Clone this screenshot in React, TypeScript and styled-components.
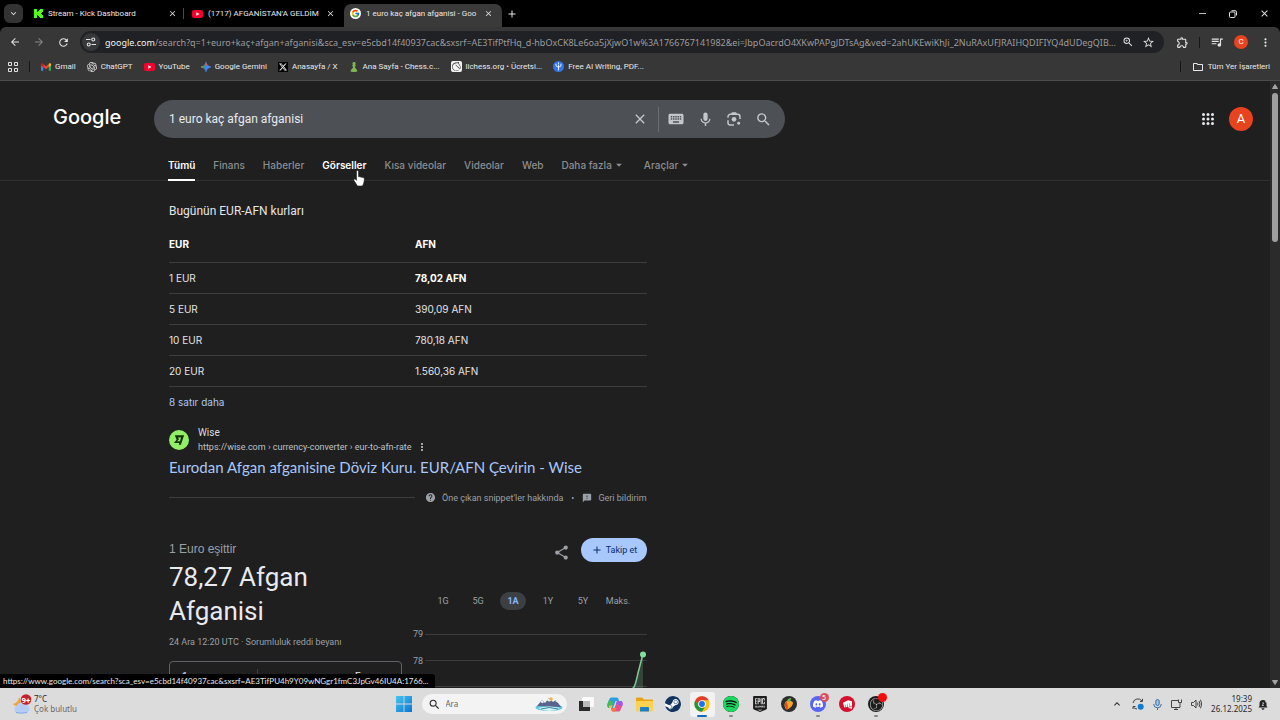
import React from "react";
import styled, { createGlobalStyle, css } from "styled-components";
import {
  MdArrowBack, MdArrowDropDown, MdArrowForward, MdClose, MdFeedback, MdHelp,
  MdKeyboard, MdMic, MdMoreVert, MdOutlineExtension, MdQueueMusic, MdRefresh, MdSearch, MdShare,
  MdStarBorder, MdZoomIn, MdAdd, MdExpandMore, MdExpandLess, MdOutlineFolder,
} from "react-icons/md";
import { FcGoogle } from "react-icons/fc";
import {
  SiChessdotcom, SiDiscord, SiEpicgames, SiLichess, SiObsstudio, SiOpenai, SiRiotgames, SiSpotify, SiSteam, SiX,
} from "react-icons/si";

const ui = `"Noto Sans", "Open Sans", sans-serif`;
const compact = `Roboto, "Noto Sans", sans-serif`;
const narrow = `Lato, Roboto, sans-serif`;
const product = `Inter, Roboto, sans-serif`;
const plain = `"Liberation Sans", Arial, sans-serif`;

const GlobalStyle = createGlobalStyle`
  * { box-sizing: border-box; }
  body { margin: 0; background: #1f1f1f; overflow: hidden; }
  button, input, select { font: inherit; color: inherit; background: none; border: 0; padding: 0; margin: 0; }
  a { color: inherit; text-decoration: none; }
  svg { display: block; flex: none; }
`;

/* ---------- browser frame ---------- */

const Window = styled.div`
  display: flex;
  flex-direction: column;
  height: 100vh;
  background: #000;
  color: #e8e8e8;
  font-family: ${ui};
`;

const IconButton = styled.button<{ $size?: number; $bg?: string; $color?: string; $radius?: number }>`
  display: flex;
  align-items: center;
  justify-content: center;
  flex: none;
  width: ${(p) => p.$size ?? 20}px;
  height: ${(p) => p.$size ?? 20}px;
  color: ${(p) => p.$color ?? "#e3e3e3"};
  background: ${(p) => p.$bg ?? "none"};
  border-radius: ${(p) => p.$radius ?? 10}px;
`;

const TabStrip = styled.div`
  display: flex;
  align-items: flex-end;
  height: 27px;
  padding-left: 4px;
  flex: none;
`;

const StripSlot = styled.div<{ $gap?: number }>`
  display: flex;
  align-items: center;
  height: 27px;
  gap: ${(p) => p.$gap ?? 0}px;
`;

const Tabs = styled.div`
  display: flex;
  margin-left: 5px;
`;

const TabItem = styled.div<{ $active?: boolean; $divider?: boolean }>`
  display: flex;
  align-items: center;
  position: relative;
  width: 158px;
  height: 23px;
  padding: 0 6px 4px 6px;
  font-family: ${compact};
  font-size: 8px;
  border-radius: 7px 7px 0 0;
  background: ${(p) => (p.$active ? "#3a3a3a" : "transparent")};
  ${(p) => p.$divider && css`
    &::after { content: ""; position: absolute; right: 2px; top: 4px; width: 1px; height: 11px; background: #4a4a4a; }
  `}
`;

const TabTitle = styled.span`
  flex: 1;
  min-width: 0;
  margin-left: 5px;
  overflow: hidden;
  white-space: nowrap;
`;

const WindowControls = styled(StripSlot)`
  margin-left: auto;
  padding-right: 6px;
`;

const Toolbar = styled.div`
  flex: none;
  background: #373737;
  border-radius: 6px 6px 0 0;
  border-bottom: 1px solid #4c4c4c;
`;

const AddressRow = styled.div`
  display: flex;
  align-items: center;
  height: 30px;
  padding: 0 5px;
`;

const NavButtons = styled.div`
  display: flex;
  gap: 4px;
  margin-right: 7px;
`;

const Omnibox = styled.div`
  display: flex;
  align-items: center;
  flex: 1;
  min-width: 0;
  height: 22px;
  padding: 0 6px 0 2px;
  border-radius: 11px;
  background: #202124;
`;

const Url = styled.div`
  flex: 1;
  min-width: 0;
  margin-left: 5px;
  overflow: hidden;
  white-space: nowrap;
  font-size: 9px;
  color: #9c9c9c;
  b { font-weight: 400; color: #f1f1f1; }
`;

const ToolbarActions = styled.div`
  display: flex;
  align-items: center;
  gap: 7px;
  margin-left: 8px;
`;

const Divider = styled.span<{ $color?: string; $height?: number; $left?: number }>`
  flex: none;
  width: 1px;
  height: ${(p) => p.$height ?? 11}px;
  margin-left: ${(p) => p.$left ?? 0}px;
  background: ${(p) => p.$color ?? "#161616"};
`;

const Avatar = styled.button<{ $size: number }>`
  flex: none;
  width: ${(p) => p.$size}px;
  height: ${(p) => p.$size}px;
  border-radius: 50%;
  background: #e8431f;
  color: #fff;
  font-family: ${compact};
  font-size: ${(p) => (p.$size > 20 ? 13 : 8)}px;
  line-height: ${(p) => p.$size}px;
  text-align: center;
`;

const Bookmarks = styled.nav`
  display: flex;
  align-items: center;
  height: 23px;
  padding: 0 10px 4px 8px;
  gap: 11px;
  font-family: ${compact};
  font-size: 8px;
`;

const Bookmark = styled.a`
  display: flex;
  align-items: center;
  gap: 4px;
  white-space: nowrap;
`;

const Spacer = styled.span`
  flex: 1;
`;

/* ---------- page ---------- */

const Viewport = styled.div`
  display: flex;
  flex: 1;
  min-height: 0;
  position: relative;
  background: #1f1f1f;
`;

const Page = styled.main`
  flex: 1;
  min-width: 0;
  overflow: hidden;
  font-family: ${product};
`;

const Scrollbar = styled.div`
  display: flex;
  flex-direction: column;
  align-items: center;
  width: 10px;
  background: #2b2b2b;
`;

const Thumb = styled.div`
  width: 6px;
  height: 149px;
  border-radius: 3px;
  background: #9f9f9f;
`;

const SearchHeader = styled.header`
  display: flex;
  align-items: center;
  padding: 19px 17px 0 0;
`;

const Logo = styled.a`
  align-self: flex-start;
  width: 154px;
  padding-left: 53px;
  font-size: 20px;
  line-height: 35px;
  font-weight: 500;
  color: #fff;
`;

const SearchBox = styled.form`
  display: flex;
  align-items: center;
  flex: 0 1 631px;
  height: 38px;
  padding: 0 12px 0 15px;
  border-radius: 19px;
  background: #4d5156;
  input { flex: 1; min-width: 0; font-family: ${compact}; font-size: 12px; color: #e8eaed; outline: 0; }
`;

const SearchTools = styled.div`
  display: flex;
  gap: 9px;
  margin-left: 7px;
`;

const HeaderActions = styled.div`
  display: flex;
  align-items: center;
  gap: 10px;
  margin-left: auto;
`;

const FilterBar = styled.nav`
  display: flex;
  gap: 18px;
  height: 43px;
  padding: 13px 0 0 168px;
  border-bottom: 1px solid #2f3031;
  font-size: 10px;
`;

const Filter = styled.a<{ $on?: boolean; $current?: boolean }>`
  position: relative;
  display: flex;
  align-items: center;
  height: 30px;
  white-space: nowrap;
  font-weight: ${(p) => (p.$on ? 600 : 500)};
  color: ${(p) => (p.$on ? "#fff" : "#8b8d90")};
  border-bottom: 2px solid ${(p) => (p.$current ? "#fff" : "transparent")};
`;

const Pointer = styled.svg`
  position: absolute;
  right: 1px;
  top: 19px;
`;

const Results = styled.div`
  width: 478px;
  margin-left: 169px;
`;

const SnippetTitle = styled.h2`
  margin: 0;
  padding-top: 21px;
  font-family: ${compact};
  font-size: 12px;
  line-height: 18px;
  font-weight: 400;
  color: #e4e5e7;
`;

const RateTable = styled.table`
  width: 100%;
  margin-top: 7px;
  border-collapse: collapse;
  table-layout: fixed;
  font-size: 10px;
  line-height: 14px;
  color: #e4e5e7;
  th, td { height: 31px; padding: 0; text-align: left; border-bottom: 1px solid #3c3e40; }
  th { height: 35px; padding-bottom: 1px; font-weight: 700; color: #fff; }
  th:first-child { width: 246px; }
  tbody tr:first-child td:last-child { font-weight: 700; color: #fff; }
`;

const MoreRows = styled.button`
  display: block;
  margin-top: 8px;
  font-size: 10px;
  line-height: 14px;
  color: #a8c7fa;
`;

const Source = styled.div`
  display: flex;
  align-items: center;
  gap: 9px;
  margin-top: 17px;
  font-family: ${compact};
`;

const SourceText = styled.div`
  font-size: 10px;
  line-height: 14px;
  color: #dadce0;
`;

const SourceUrl = styled.div`
  display: flex;
  align-items: center;
  gap: 4px;
  font-size: 9px;
  color: #bdc1c6;
`;

const ResultLink = styled.a`
  display: block;
  margin-top: 3px;
  font-family: ${narrow};
  font-size: 15px;
  line-height: 21px;
  white-space: nowrap;
  color: #a8c7fa;
`;

const SnippetFooter = styled.div`
  display: flex;
  align-items: center;
  margin-top: 12px;
  height: 16px;
  font-family: ${compact};
  font-size: 9px;
  color: #9aa0a6;
  white-space: nowrap;
`;

const Rule = styled.span`
  flex: none;
  width: 246px;
  height: 1px;
  background: #3c3e40;
`;

const FooterLink = styled.a<{ $left: number }>`
  display: flex;
  align-items: center;
  gap: 6px;
  margin-left: ${(p) => p.$left}px;
`;

const CurrencyCard = styled.section`
  display: flex;
  justify-content: space-between;
  margin-top: 32px;
`;

const Converter = styled.div`
  width: 233px;
  font-family: ${compact};
`;

const AmountLabel = styled.div`
  font-family: ${plain};
  font-size: 12px;
  line-height: 22px;
  color: #9aa0a6;
`;

const Amount = styled.div`
  width: 200px;
  font-size: 26px;
  line-height: 34px;
  color: #e8eaed;
`;

const RateTime = styled.div`
  margin-top: 8px;
  font-size: 9px;
  line-height: 12px;
  color: #9aa0a6;
`;

const ConvertRow = styled.div`
  display: flex;
  align-items: center;
  height: 32px;
  margin-top: 13px;
  padding: 0 12px;
  border: 1px solid #5f6368;
  border-radius: 4px;
  font-size: 10px;
  input { width: 75px; }
  select { flex: 1; padding-left: 97px; appearance: none; }
`;

const ChartPanel = styled.div`
  width: 234px;
  font-family: ${compact};
  font-size: 9px;
  color: #9aa0a6;
`;

const CurrencyActions = styled.div`
  display: flex;
  align-items: flex-start;
  justify-content: flex-end;
  gap: 5px;
`;

const Follow = styled.button`
  display: flex;
  align-items: center;
  justify-content: center;
  gap: 3px;
  width: 66px;
  height: 24px;
  border-radius: 12px;
  background: #a8c7fa;
  color: #062e6f;
`;

const Ranges = styled.div`
  display: flex;
  gap: 9px;
  margin-top: 24px;
  padding-left: 17px;
`;

const Range = styled.button<{ $on?: boolean }>`
  width: 26px;
  height: 18px;
  border-radius: 9px;
  white-space: nowrap;
  font-weight: ${(p) => (p.$on ? 700 : 400)};
  color: ${(p) => (p.$on ? "#8ab4f8" : "inherit")};
  background: ${(p) => (p.$on ? "#3c4043" : "none")};
`;

const StatusBubble = styled.div`
  position: absolute;
  left: 0;
  bottom: 0;
  height: 14px;
  padding: 0 7px 0 3px;
  border-radius: 0 3px 0 0;
  background: #000;
  color: #e8e8e8;
  font-family: ${narrow};
  font-size: 8px;
  line-height: 14px;
  white-space: nowrap;
`;

/* ---------- taskbar ---------- */

const Taskbar = styled.footer`
  display: grid;
  grid-template-columns: 1fr auto 1fr;
  align-items: center;
  flex: none;
  height: 32px;
  padding: 0 12px;
  background: #dcdcdc;
  color: #2a2a2a;
  font-size: 8px;
  line-height: 10px;
`;

const Weather = styled.button`
  display: flex;
  align-items: center;
  gap: 2px;
  width: max-content;
  text-align: left;
  span { display: block; color: #6a6a6a; }
`;

const Apps = styled.div`
  display: flex;
  align-items: center;
  gap: 4px;
`;

const TaskSearch = styled.label`
  display: flex;
  align-items: center;
  gap: 5px;
  width: 145px;
  height: 20px;
  margin: 0 3px 0 1px;
  padding: 0 4px 0 6px;
  border-radius: 10px;
  background: #f3f3f3;
  input { flex: 1; min-width: 0; outline: 0; }
  input::placeholder { color: #666; opacity: 1; }
`;

const AppButton = styled.button<{ $active?: boolean; $running?: boolean }>`
  position: relative;
  display: flex;
  align-items: center;
  justify-content: center;
  width: 25px;
  height: 25px;
  border-radius: 3px;
  background: ${(p) => (p.$active ? "#f2f2f2" : "none")};
  ${(p) => (p.$active || p.$running) && css`
    &::after {
      content: "";
      position: absolute;
      bottom: 0;
      width: ${p.$active ? 10 : 4}px;
      height: 2px;
      border-radius: 1px;
      background: ${p.$active ? "#0f6cbd" : "#888"};
    }
  `}
`;

const Disc = styled.span<{ $bg: string; $color?: string; $radius?: number; $size?: number }>`
  display: flex;
  align-items: center;
  justify-content: center;
  flex: none;
  width: ${(p) => p.$size ?? 16}px;
  height: ${(p) => p.$size ?? 16}px;
  border-radius: ${(p) => p.$radius ?? 8}px;
  background: ${(p) => p.$bg};
  color: ${(p) => p.$color ?? "#fff"};
`;

const Badge = styled.span<{ $bg: string }>`
  position: absolute;
  top: 1px;
  right: 2px;
  width: 9px;
  height: 9px;
  border-radius: 50%;
  background: ${(p) => p.$bg};
  color: #fff;
  font-size: 7px;
  line-height: 9px;
  text-align: center;
`;

const Tray = styled.div<{ $gap: number }>`
  display: flex;
  align-items: center;
  justify-content: flex-end;
  gap: ${(p) => p.$gap}px;
`;

const Clock = styled.time`
  text-align: right;
`;

/* ---------- drawings ---------- */

const KickIcon = () => (
  <svg width="9" height="9" viewBox="0 0 9 9" fill="#53fc18" shapeRendering="crispEdges">
    <path d="M0 0h3v3h1V2h1V1h1V0h3v3H8v1H7v1h1v1h1v3H6V8H5V7H4V6H3v3H0z" />
  </svg>
);

const YouTubeIcon = () => (
  <svg width="11" height="8" viewBox="0 0 11 8">
    <rect width="11" height="8" rx="2" fill="#f5002d" />
    <path d="M4.3 2.2v3.6L7.5 4z" fill="#fff" />
  </svg>
);

const GmailIcon = () => (
  <svg width="10" height="8" viewBox="0 0 20 15">
    <path d="M0 15V2.5h4.5V15z" fill="#4285f4" />
    <path d="M15.500 15V2.500H20V15z" fill="#34a853" />
    <path d="M4.500 8V2l5.500 4.200L15.500 2v6L10 12z" fill="#ea4335" />
    <path d="M0 4.500V2c0-2 2.300-2.600 3.700-1.500L4.500 1v7z" fill="#c5221f" />
    <path d="M20 4.500V2c0-2-2.300-2.600-3.700-1.500L15.500 1v7z" fill="#fbbc04" />
  </svg>
);

const GeminiIcon = () => (
  <svg width="10" height="10" viewBox="0 0 20 20">
    <defs>
      <linearGradient id="gem" x1="0" y1="0.4" x2="1" y2="0.6">
        <stop offset="0" stopColor="#f6b73c" />
        <stop offset=".25" stopColor="#35a66b" />
        <stop offset=".45" stopColor="#3b82f6" />
        <stop offset="1" stopColor="#5a8df8" />
      </linearGradient>
    </defs>
    <path d="M10 0c1 5 4 8.500 10 10-6 1.500-9 5-10 10-1-5-4-8.500-10-10C6 8.500 9 5 10 0z" fill="url(#gem)" stroke="url(#gem)" strokeWidth="1" />
    <path d="M10 0c.6 3 1.500 4.500 3 6l-3 1.500L7 6c1.500-1.500 2.400-3 3-6z" fill="#ea5545" />
  </svg>
);

const GridIcon = () => (
  <svg width="10" height="10" viewBox="0 0 10 10" fill="none" stroke="#e3e3e3">
    <path d="M.5.5h3v3h-3zM6.500.5h3v3h-3zM.5 6.500h3v3h-3zM6.500 6.500h3v3h-3z" />
  </svg>
);

const TuneIcon = () => (
  <svg width="10" height="10" viewBox="0 0 20 20" fill="none" stroke="#e3e3e3" strokeWidth="2.200">
    <path d="M0 5h9M11 15h9" />
    <circle cx="14.500" cy="5" r="3" />
    <circle cx="5.500" cy="15" r="3" />
  </svg>
);

const QuillIcon = () => (
  <svg width="11" height="11" viewBox="0 0 20 20">
    <circle cx="10" cy="10" r="10" fill="#3276e8" />
    <path d="M10 17V7M5.500 5v2.500q0 3 3 3h3q3 0 3-3V5M10 3v3" stroke="#fff" strokeWidth="1.600" fill="none" />
  </svg>
);

const AppsIcon = () => (
  <svg width="12" height="12" viewBox="0 0 12 12" fill="#e8eaed">
    {[1.5, 6, 10.5].map((y) => [1.5, 6, 10.5].map((x) => <circle key={`${x}-${y}`} cx={x} cy={y} r="1.500" />))}
  </svg>
);

const LensIcon = () => (
  <svg width="16" height="16" viewBox="0 0 24 24" fill="none" stroke="#c4c7ca" strokeWidth="2.200">
    <path d="M3 10V8.500A3.500 3.500 0 0 1 6.500 5h11A3.500 3.500 0 0 1 21 8.500V12M3 14v3.500A3.500 3.500 0 0 0 6.500 21H12M8 5l1.500-2h5L16 5" />
    <circle cx="12" cy="12.500" r="3.500" fill="#c4c7ca" stroke="none" />
    <circle cx="19" cy="18.500" r="2.200" fill="#c4c7ca" stroke="none" />
  </svg>
);

const WiseIcon = () => (
  <svg width="20" height="20" viewBox="0 0 20 20">
    <circle cx="10" cy="10" r="10" fill="#92ee66" />
    <path d="M5.800 5.300h9.300L11.900 14.700H9.700l2.400-7.300H9l1 1.800-1.800 2.100h3l-.6 1.700H4.900l2.700-3.300z" fill="#163300" />
  </svg>
);

const HandIcon = () => (
  <Pointer width="12" height="17" viewBox="0 0 12 17">
    <path d="M3.500 1.500c0-1.300 2-1.300 2 0V6.500l4.500 1c1.100.3 1.500 1 1.400 2l-.6 3.500L9.500 16H4.500L1 10.500c-.6-1 .5-1.800 1.300-1.200l1.200 1z" fill="#fff" stroke="#222" strokeWidth=".6" />
  </Pointer>
);

const MinimizeIcon = () => (
  <svg width="7" height="1" viewBox="0 0 7 1"><path d="M0 0h7v1H0z" fill="#bbb" /></svg>
);

const RestoreIcon = () => (
  <svg width="8" height="8" viewBox="0 0 8 8" fill="none" stroke="#e3e3e3">
    <rect x=".5" y="2" width="5.500" height="5.500" rx="1" />
    <path d="M2.500.7H6A1.500 1.500 0 0 1 7.500 2.200V5.500" />
  </svg>
);

const ScrollArrow = ({ down }: { down?: boolean }) => (
  <svg width="8" height="12" viewBox="0 0 8 12">
    <path d={down ? "M1.500 4.500h5L4 8.500z" : "M1.500 7.500h5L4 3.500z"} fill="#a5a5a5" stroke="#a5a5a5" strokeLinejoin="round" />
  </svg>
);

const Chart = () => (
  <svg width="234" height="110" viewBox="0 0 234 110" role="img" aria-label="EUR/AFN">
    <path d="M12 24.500h222M12 50.500h222M12 76.500h222" stroke="#3a3c3f" />
    <path d="M216 110V80c5-2 7-8 9-17l5-19v66z" fill="#81c995" opacity=".22" />
    <path d="M218 80c4-2 5-8 7-17l5-19" fill="none" stroke="#81c995" strokeWidth="1.500" />
    <circle cx="230" cy="44.500" r="3" fill="#81e09a" />
    <text x="0" y="27" fontSize="9" fill="#9aa0a6">79</text>
    <text x="0" y="54" fontSize="9" fill="#9aa0a6">78</text>
  </svg>
);

const WeatherIcon = () => (
  <svg width="20" height="20" viewBox="0 0 20 20">
    <path d="M7 3c-.5 4-2.500 6-6 7 2 3 8 3 9-1z" fill="#f2a33a" />
    <path d="M5 19a4 4 0 0 1 0-7.500 4.500 4.500 0 0 1 8-1 4.300 4.300 0 0 1 1 8.500z" fill="#b5cdf5" />
    <path d="M4 18.500c3 .8 8 .8 11 0" stroke="#7da6ea" fill="none" />
    <circle cx="14" cy="5.500" r="5.300" fill="#c4202c" />
    <text x="9.500" y="8.500" fontSize="8" fontWeight="700" fill="#fff" fontFamily="Roboto, sans-serif">9+</text>
  </svg>
);

const WindowsIcon = () => (
  <svg width="16" height="16" viewBox="0 0 16 16">
    <defs>
      <linearGradient id="win" x1="0" y1="0" x2="1" y2="1">
        <stop offset="0" stopColor="#48c5f0" />
        <stop offset="1" stopColor="#0b74cf" />
      </linearGradient>
    </defs>
    <path d="M0 0h7.600v7.600H0zM8.400 0H16v7.600H8.400zM0 8.400h7.600V16H0zM8.400 8.400H16V16H8.400z" fill="url(#win)" />
  </svg>
);

const SceneIcon = () => (
  <svg width="28" height="16" viewBox="0 0 28 16">
    <ellipse cx="14" cy="11.500" rx="13.500" ry="3.500" fill="#5ec3dc" />
    <path d="M2 10l5-6 3 3 4-5 4 4 3-2 5 7z" fill="#59638c" />
    <path d="M5.500 6L7 4l2 2.500-2 .5zM12 4.500L14 2l2.500 3-2.500.5zM20 5l1.500-1 2 3z" fill="#f4f4fa" />
    <circle cx="16" cy="3" r="1.800" fill="#f3b24d" />
    <path d="M3 12q11-3 22 0-5 3-11 3T3 12z" fill="#d8f3f8" />
    <path d="M6 13q8-3 17 0" stroke="#2e7fa6" fill="none" />
  </svg>
);

const TaskViewIcon = () => (
  <svg width="16" height="15" viewBox="0 0 16 15">
    <rect x="4" y="0" width="12" height="10" rx="1" fill="#fafafa" />
    <path d="M1 4h4v6h7v4H1z" fill="#2a2a2a" />
    <path d="M5 4h7v6H5z" fill="#b9b9b9" />
  </svg>
);

const CopilotIcon = () => (
  <svg width="16" height="15" viewBox="0 0 32 30">
    <path d="M10 1h9c2 0 3 1 4 3l1 4h-7l-5 14H5c-4 0-5-4-4-8L5 4c1-2 2-3 5-3z" fill="#2a9fe0" />
    <path d="M1 14L4 6l8 4-3 12H5c-4 0-5-4-4-8z" fill="#46b85a" />
    <path d="M4 18l7-2-2 6H5z" fill="#f5c431" />
    <path d="M22 29h-9c-2 0-3-1-4-3l-1-4h7l5-14h7c4 0 5 4 4 8l-4 10c-1 2-2 3-5 3z" fill="#e2518e" />
    <path d="M20 8h7c4 0 5 4 4 8l-1 3-12-5z" fill="#9b5de5" />
    <path d="M8 22h11l-3 7h-3c-2 0-3-1-4-3z" fill="#f4793b" />
  </svg>
);

const FolderIcon = () => (
  <svg width="17" height="15" viewBox="0 0 17 15">
    <path d="M0 1.500A1 1 0 0 1 1 .5h5l2 2h8a1 1 0 0 1 1 1V13H0z" fill="#e8a317" />
    <path d="M0 5a1 1 0 0 1 1-1h15a1 1 0 0 1 1 1v8.500a1 1 0 0 1-1 1H1a1 1 0 0 1-1-1z" fill="#fdd152" />
    <path d="M4 14.500V11a1 1 0 0 1 1-1h7a1 1 0 0 1 1 1v3.500z" fill="#1a7ecb" />
  </svg>
);

const ChromeIcon = () => (
  <svg width="16" height="16" viewBox="0 0 48 48">
    <circle cx="24" cy="24" r="23" fill="#fbc116" />
    <path d="M4.100 12.500A23 23 0 0 1 43.900 12.500H24L14 29.800z" fill="#e33b2e" />
    <path d="M4.100 12.500A23 23 0 0 0 24 47l10-17.200-10 5.700-10-5.700z" fill="#229342" />
    <circle cx="24" cy="24" r="11.500" fill="#fff" />
    <circle cx="24" cy="24" r="8.800" fill="#1a73e8" />
  </svg>
);

const FruityIcon = () => (
  <svg width="16" height="16" viewBox="0 0 32 32">
    <circle cx="16" cy="16" r="16" fill="#2d2d2f" />
    <path d="M9 12c3-4 15-3 15 2 0 5-8 13-12 13S5 17 9 12z" fill="#f7a12b" />
    <path d="M9 13c-2 4-1 12 3 14 3-2 2-11-1-15z" fill="#d8501c" />
    <path d="M12 11c0-4 4-7 9-7-2 2-1 5-4 8z" fill="#6cbd45" />
  </svg>
);

const UpdateIcon = () => (
  <svg width="12" height="12" viewBox="0 0 12 12" fill="none" stroke="#444">
    <path d="M1 5a5 5 0 0 1 9-2M10.500.8V3.500H8M1 11V8.500h2.500M1.300 9A5 5 0 0 0 5 11" />
    <circle cx="8.700" cy="8.700" r="3" fill="#0f7bd1" stroke="none" />
  </svg>
);

const TrayMicIcon = () => (
  <svg width="9" height="11" viewBox="0 0 9 11" fill="none" stroke="#3a6ea5">
    <rect x="2.800" y=".5" width="3.400" height="6" rx="1.700" fill="#9cc3e6" />
    <path d="M.7 5a3.800 3.800 0 0 0 7.600 0M4.500 8.800V11" />
  </svg>
);

const NetworkIcon = () => (
  <svg width="11" height="11" viewBox="0 0 11 11" fill="none" stroke="#444">
    <path d="M7 1.500H.5v7H9V6M3 10.500h4M5 8.500v2M7.500.5v3h3v-3M9 3.500V6" />
  </svg>
);

const VolumeIcon = () => (
  <svg width="11" height="10" viewBox="0 0 11 10" fill="none" stroke="#444">
    <path d="M.5 3.500h2L5 1v8L2.500 6.500h-2zM6.500 3.500q1 1.500 0 3M8 2q2 3 0 6M9.500.7q2.500 4.300 0 8.600" />
  </svg>
);

const BellIcon = () => (
  <svg width="10" height="11" viewBox="0 0 10 11">
    <path d="M.5 8.500L1.500 7V4.500a3.500 3.500 0 0 1 7 0V7l1 1.500zM3.500 9.300h3a1.500 1.500 0 0 1-3 0z" fill="#222" />
    <path d="M4 4h2L4 6.500h2M7 .7h2L7.300 3H9" stroke="#ddd" strokeWidth=".7" fill="none" />
  </svg>
);

/* ---------- content ---------- */

const rates = [
  ["1 EUR", "78,02 AFN"],
  ["5 EUR", "390,09 AFN"],
  ["10 EUR", "780,18 AFN"],
  ["20 EUR", "1.560,36 AFN"],
];

const ranges = ["1G", "5G", "1A", "1Y", "5Y", "Maks."];

const bookmarks: [React.ReactNode, string][] = [
  [<GmailIcon />, "Gmail"],
  [<SiOpenai size={10} />, "ChatGPT"],
  [<YouTubeIcon />, "YouTube"],
  [<GeminiIcon />, "Google Gemini"],
  [<Disc $bg="#000" $size={10} $radius={0}><SiX size={8} /></Disc>, "Anasayfa / X"],
  [<SiChessdotcom size={10} color="#7fb653" />, "Ana Sayfa - Chess.c..."],
  [<Disc $bg="#f4f4f4" $size={11} $radius={2} $color="#222"><SiLichess size={9} /></Disc>, "lichess.org • Ücretsi..."],
  [<QuillIcon />, "Free AI Writing, PDF..."],
];

export default function App() {
  return (
    <Window>
      <GlobalStyle />
      <TabStrip>
        <StripSlot>
          <IconButton aria-label="Sekmelerde ara" $size={19} $bg="#333" $radius={6}><MdExpandMore size={11} /></IconButton>
        </StripSlot>
        <Tabs>
          <TabItem $divider>
            <KickIcon /><TabTitle>Stream - Kick Dashboard</TabTitle>
            <IconButton aria-label="Kapat" $size={16}><MdClose size={9} /></IconButton>
          </TabItem>
          <TabItem>
            <YouTubeIcon /><TabTitle>(1717) AFGANİSTAN'A GELDİM</TabTitle>
            <IconButton aria-label="Kapat" $size={16}><MdClose size={9} /></IconButton>
          </TabItem>
          <TabItem $active>
            <Disc $bg="#fff" $size={11}><FcGoogle size={9} /></Disc>
            <TabTitle>1 euro kaç afgan afganisi - Goo</TabTitle>
            <IconButton aria-label="Kapat" $size={16}><MdClose size={9} /></IconButton>
          </TabItem>
        </Tabs>
        <StripSlot><IconButton aria-label="Yeni sekme" $size={20}><MdAdd size={12} /></IconButton></StripSlot>
        <WindowControls $gap={11}>
          <IconButton aria-label="Simge durumuna küçült"><MinimizeIcon /></IconButton>
          <IconButton aria-label="Önceki boyut"><RestoreIcon /></IconButton>
          <IconButton aria-label="Kapat"><MdClose size={11} /></IconButton>
        </WindowControls>
      </TabStrip>

      <Toolbar>
        <AddressRow>
          <NavButtons>
            <IconButton aria-label="Geri"><MdArrowBack size={12} /></IconButton>
            <IconButton aria-label="İleri" $color="#858585"><MdArrowForward size={12} /></IconButton>
            <IconButton aria-label="Yenile"><MdRefresh size={13} /></IconButton>
          </NavButtons>
          <Omnibox>
            <IconButton aria-label="Site bilgileri" $size={18} $bg="#37383a"><TuneIcon /></IconButton>
            <Url role="textbox" aria-label="Adres çubuğu">
              <b>google.com</b>/search?q=1+euro+kaç+afgan+afganisi&amp;sca_esv=e5cbd14f40937cac&amp;sxsrf=AE3TifPtfHq_d-hbOxCK8Le6oa5jXjwO1w%3A1766767141982&amp;ei=JbpOacrdO4XKwPAPgJDTsAg&amp;ved=2ahUKEwiKhJi_2NuRAxUFJRAIHQDIFIYQ4dUDegQIB...
            </Url>
            <IconButton aria-label="Yakınlaştırma"><MdZoomIn size={12} /></IconButton>
            <IconButton aria-label="Yer işareti ekle"><MdStarBorder size={13} /></IconButton>
          </Omnibox>
          <ToolbarActions>
            <IconButton aria-label="Uzantılar"><MdOutlineExtension size={13} /></IconButton>
            <Divider />
            <IconButton aria-label="Medya"><MdQueueMusic size={14} /></IconButton>
            <Avatar $size={14} aria-label="Profil">C</Avatar>
            <IconButton aria-label="Menü"><MdMoreVert size={13} /></IconButton>
          </ToolbarActions>
        </AddressRow>
        <Bookmarks aria-label="Yer işaretleri">
          <IconButton aria-label="Sekme grupları" $size={10} $radius={0}><GridIcon /></IconButton>
          <Divider />
          {bookmarks.map(([icon, label]) => (
            <Bookmark href="#" key={label}>{icon}{label}</Bookmark>
          ))}
          <Spacer />
          <Divider />
          <Bookmark href="#"><MdOutlineFolder size={12} />Tüm Yer İşaretleri</Bookmark>
        </Bookmarks>
      </Toolbar>

      <Viewport>
        <Page>
          <SearchHeader>
            <Logo href="#">Google</Logo>
            <SearchBox role="search">
              <input aria-label="Ara" defaultValue="1 euro kaç afgan afganisi" />
              <IconButton type="button" aria-label="Temizle" $color="#c4c7ca"><MdClose size={16} /></IconButton>
              <Divider $color="#6b6f74" $height={25} $left={8} />
              <SearchTools>
                <IconButton type="button" aria-label="Klavye" $color="#c4c7ca"><MdKeyboard size={18} /></IconButton>
                <IconButton type="button" aria-label="Sesle ara" $color="#c4c7ca"><MdMic size={17} /></IconButton>
                <IconButton type="button" aria-label="Görselle ara"><LensIcon /></IconButton>
                <IconButton aria-label="Ara" $color="#c4c7ca"><MdSearch size={17} /></IconButton>
              </SearchTools>
            </SearchBox>
            <HeaderActions>
              <IconButton aria-label="Google uygulamaları" $size={22}><AppsIcon /></IconButton>
              <Avatar $size={24} aria-label="Google hesabı">A</Avatar>
            </HeaderActions>
          </SearchHeader>

          <FilterBar>
            <Filter href="#" $on $current>Tümü</Filter>
            <Filter href="#">Finans</Filter>
            <Filter href="#">Haberler</Filter>
            <Filter href="#" $on>Görseller<HandIcon /></Filter>
            <Filter href="#">Kısa videolar</Filter>
            <Filter href="#">Videolar</Filter>
            <Filter href="#">Web</Filter>
            <Filter href="#">Daha fazla<MdArrowDropDown size={14} /></Filter>
            <Filter href="#">Araçlar<MdArrowDropDown size={14} /></Filter>
          </FilterBar>

          <Results>
            <SnippetTitle>Bugünün EUR-AFN kurları</SnippetTitle>
            <RateTable>
              <thead><tr><th>EUR</th><th>AFN</th></tr></thead>
              <tbody>
                {rates.map(([eur, afn]) => <tr key={eur}><td>{eur}</td><td>{afn}</td></tr>)}
              </tbody>
            </RateTable>
            <MoreRows>8 satır daha</MoreRows>

            <Source>
              <WiseIcon />
              <SourceText>
                Wise
                <SourceUrl>https://wise.com › currency-converter › eur-to-afn-rate <MdMoreVert size={12} /></SourceUrl>
              </SourceText>
            </Source>
            <ResultLink href="#">Eurodan Afgan afganisine Döviz Kuru. EUR/AFN Çevirin - Wise</ResultLink>
            <SnippetFooter>
              <Rule />
              <FooterLink href="#" $left={10}><MdHelp size={11} />Öne çıkan snippet'ler hakkında</FooterLink>
              <FooterLink as="span" $left={8}>•</FooterLink>
              <FooterLink href="#" $left={8}><MdFeedback size={10} />Geri bildirim</FooterLink>
            </SnippetFooter>

            <CurrencyCard>
              <Converter>
                <AmountLabel>1 Euro eşittir</AmountLabel>
                <Amount>78,27 Afgan Afganisi</Amount>
                <RateTime>24 Ara 12:20 UTC · Sorumluluk reddi beyanı</RateTime>
                <ConvertRow>
                  <input aria-label="Tutar" defaultValue="1" />
                  <Divider $color="#3c4043" $height={16} />
                  <select aria-label="Para birimi"><option>Euro</option></select>
                </ConvertRow>
              </Converter>
              <ChartPanel>
                <CurrencyActions>
                  <IconButton aria-label="Paylaş" $size={30} $color="#9aa0a6"><MdShare size={17} /></IconButton>
                  <Follow><MdAdd size={12} />Takip et</Follow>
                </CurrencyActions>
                <Ranges>{ranges.map((r) => <Range key={r} $on={r === "1A"}>{r}</Range>)}</Ranges>
                <Chart />
              </ChartPanel>
            </CurrencyCard>
          </Results>
        </Page>
        <Scrollbar>
          <ScrollArrow />
          <Thumb />
          <Spacer />
          <ScrollArrow down />
        </Scrollbar>
        <StatusBubble>https://www.google.com/search?sca_esv=e5cbd14f40937cac&amp;sxsrf=AE3TifPU4h9Y09wNGgr1fmC3JpGv46IU4A:1766...</StatusBubble>
      </Viewport>

      <Taskbar>
        <Weather><WeatherIcon /><div>7°C<span>Çok bulutlu</span></div></Weather>
        <Apps>
          <AppButton aria-label="Başlat"><WindowsIcon /></AppButton>
          <TaskSearch><MdSearch size={13} /><input aria-label="Ara" placeholder="Ara" /><SceneIcon /></TaskSearch>
          <AppButton aria-label="Görev görünümü"><TaskViewIcon /></AppButton>
          <AppButton aria-label="Copilot"><CopilotIcon /></AppButton>
          <AppButton aria-label="Dosya Gezgini"><FolderIcon /></AppButton>
          <AppButton aria-label="Steam"><Disc $bg="#fff" $color="#12355f"><SiSteam size={16} /></Disc></AppButton>
          <AppButton aria-label="Chrome" $active><ChromeIcon /></AppButton>
          <AppButton aria-label="Spotify" $running><Disc $bg="#111" $color="#1ed760"><SiSpotify size={16} /></Disc></AppButton>
          <AppButton aria-label="Epic Games"><SiEpicgames size={16} color="#1d1d1d" /></AppButton>
          <AppButton aria-label="FL Studio"><FruityIcon /></AppButton>
          <AppButton aria-label="Discord" $running><Disc $bg="#5865f2"><SiDiscord size={10} /></Disc><Badge $bg="#d9505a">5</Badge></AppButton>
          <AppButton aria-label="Riot Client"><Disc $bg="#d5102f"><SiRiotgames size={9} /></Disc></AppButton>
          <AppButton aria-label="OBS Studio" $running><Disc $bg="#1d1d1d" $color="#c9c9c9"><SiObsstudio size={13} /></Disc><Badge $bg="#f40b0b" /></AppButton>
        </Apps>
        <Tray $gap={6}>
          <Tray $gap={9}>
            <MdExpandLess size={12} />
            <UpdateIcon /><TrayMicIcon /><NetworkIcon /><VolumeIcon />
            <Clock>19:39<br />26.12.2025</Clock>
          </Tray>
          <BellIcon />
        </Tray>
      </Taskbar>
    </Window>
  );
}
